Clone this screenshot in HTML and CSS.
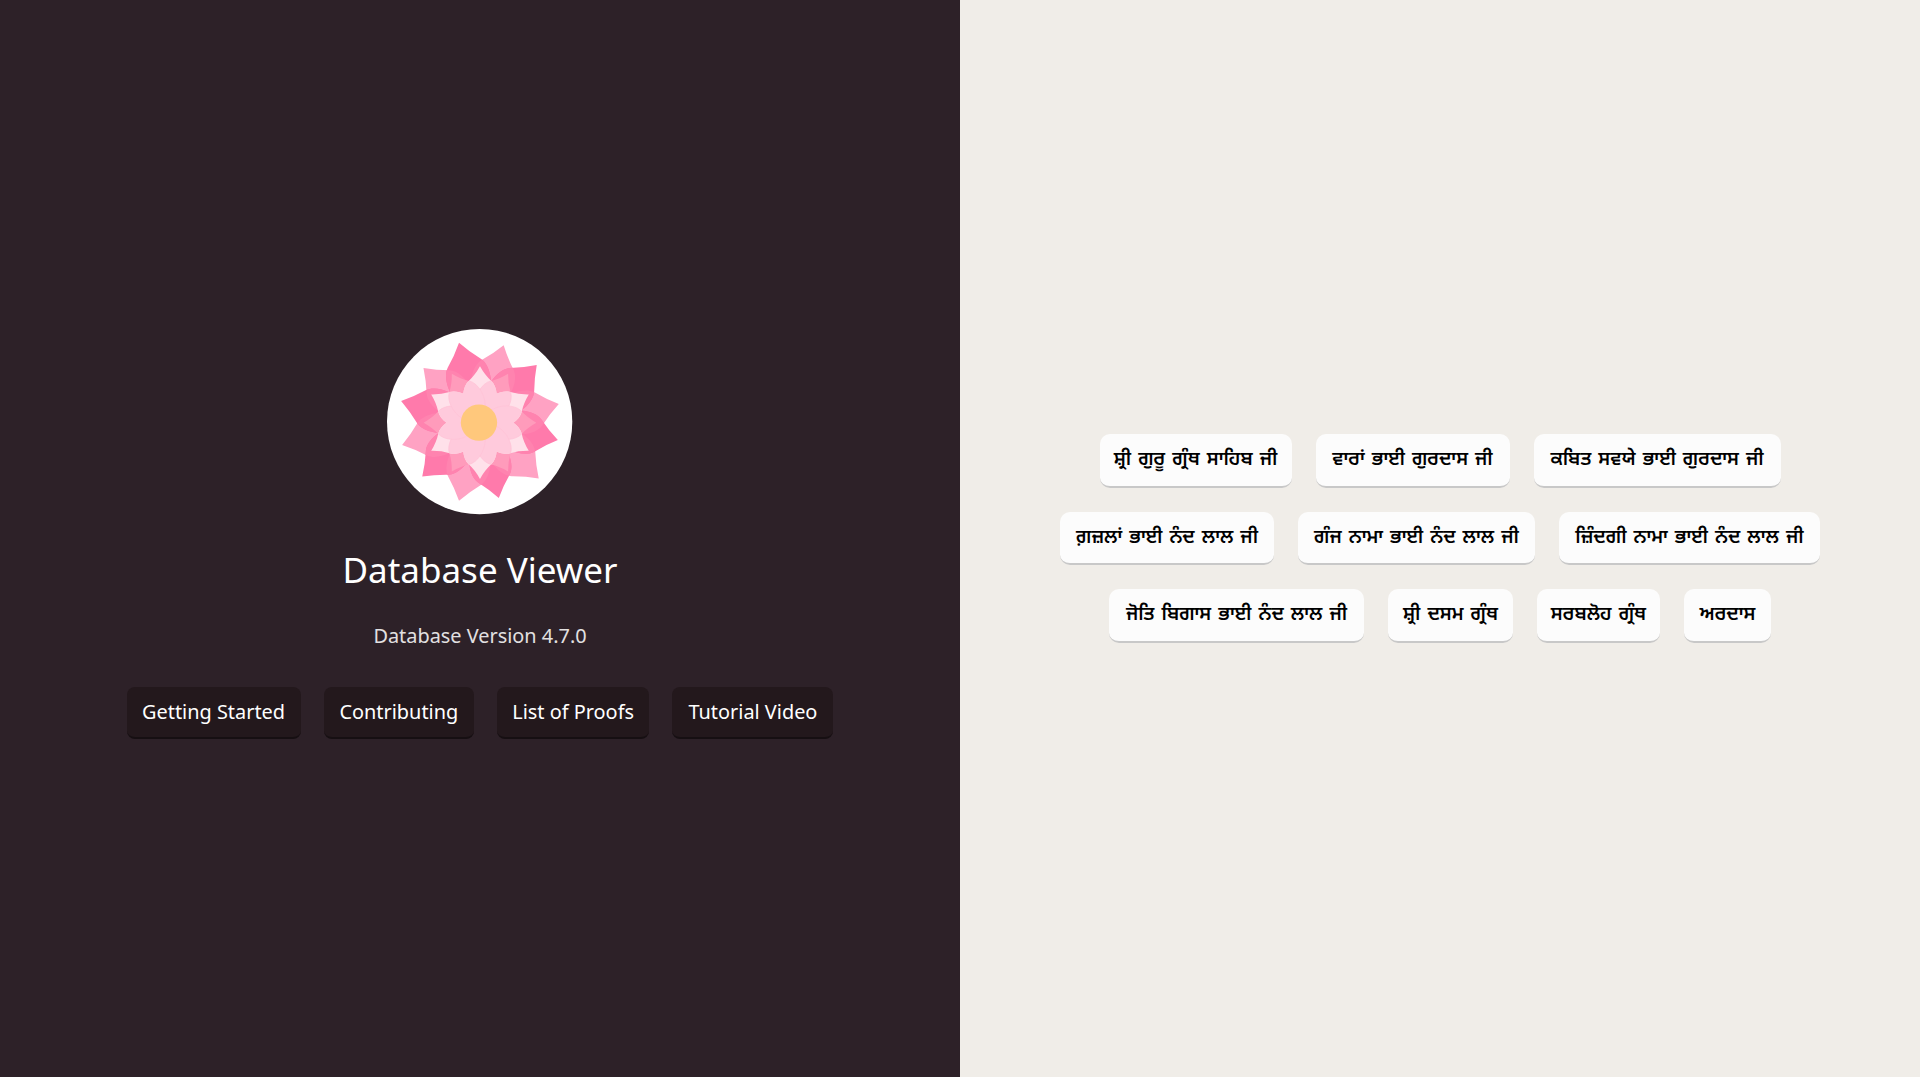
FILE: index.html
```
<!DOCTYPE html>
<html lang="en">
<head>
<meta charset="utf-8">
<title>Database Viewer</title>
<link rel="stylesheet" href="styles.css">
</head>
<body>
<main class="home">
  <section class="intro">
    <svg class="logo" viewBox="22 22 556 556" role="img" aria-label="Lotus">
      <defs>
        <path id="outer" d="M0-243Q-23-209-51-180C-72-155-68-105-45-55L0 0L45-55C68-105 72-155 51-180Q23-209 0-243Z"/>
        <path id="inner" d="M0-169Q-15-142-34-125C-53-107-56-68-40-38Q-25-8 0 0Q25-8 40-38C56-68 53-107 34-125Q15-142 0-169Z"/>
        <clipPath id="deep-clip">
          <use href="#outer" transform="rotate(-14.7) scale(1.02)"/><use href="#outer" transform="rotate(44.5)"/><use href="#outer" transform="rotate(102.6) scale(.985)"/><use href="#outer" transform="rotate(166) scale(.96)"/><use href="#outer" transform="rotate(227) scale(.975)"/><use href="#outer" transform="rotate(285.4) scale(1.01)"/>
        </clipPath>
        <clipPath id="pale-clip">
          <use href="#inner"/><use href="#inner" transform="rotate(60)"/><use href="#inner" transform="rotate(120)"/><use href="#inner" transform="rotate(180)"/><use href="#inner" transform="rotate(240)"/><use href="#inner" transform="rotate(300)"/>
        </clipPath>
        <g id="deep">
          <use href="#outer" transform="rotate(-14.7) scale(1.02)"/><use href="#outer" transform="rotate(44.5)"/><use href="#outer" transform="rotate(102.6) scale(.985)"/><use href="#outer" transform="rotate(166) scale(.96)"/><use href="#outer" transform="rotate(227) scale(.975)"/><use href="#outer" transform="rotate(285.4) scale(1.01)"/>
        </g>
        <g id="soft">
          <use href="#outer" transform="rotate(17)"/><use href="#outer" transform="rotate(76.7)"/><use href="#outer" transform="rotate(133.5)"/><use href="#outer" transform="rotate(195)"/><use href="#outer" transform="rotate(254)"/><use href="#outer" transform="rotate(314) scale(.97)"/>
        </g>
        <g id="pale">
          <use href="#inner"/><use href="#inner" transform="rotate(60)"/><use href="#inner" transform="rotate(120)"/><use href="#inner" transform="rotate(180)"/><use href="#inner" transform="rotate(240)"/><use href="#inner" transform="rotate(300)"/>
        </g>
        <g id="mid">
          <use href="#inner" transform="rotate(30)"/><use href="#inner" transform="rotate(90)"/><use href="#inner" transform="rotate(150)"/><use href="#inner" transform="rotate(210)"/><use href="#inner" transform="rotate(270)"/><use href="#inner" transform="rotate(330)"/>
        </g>
      </defs>
      <circle cx="300" cy="300" r="278" fill="#fff"/>
      <g transform="translate(301 303)">
        <use href="#soft" fill="#ffa2c3"/>
        <use href="#deep" fill="#ff7aab"/>
        <g clip-path="url(#deep-clip)"><use href="#soft" fill="#ff83af"/></g>
        <use href="#mid" fill="#ff9bbb"/>
        <use href="#pale" fill="#ffe1ea"/>
        <g clip-path="url(#pale-clip)"><use href="#mid" fill="#ffcadc" stroke="#ffc2d7" stroke-width="2"/></g>
      </g>
      <circle cx="298" cy="303" r="54.5" fill="#ffc87c"/>
    </svg>
    <h1 class="title">Database Viewer</h1>
    <p class="version">Database Version 4.7.0</p>
    <nav class="links">
      <a class="link w-started">Getting Started</a>
      <a class="link w-contrib">Contributing</a>
      <a class="link w-proofs">List of Proofs</a>
      <a class="link w-video">Tutorial Video</a>
    </nav>
  </section>
  <section class="sources" lang="pa">
    <div class="row">
      <a class="source w192">ਸ਼੍ਰੀ ਗੁਰੂ ਗ੍ਰੰਥ ਸਾਹਿਬ ਜੀ</a>
      <a class="source w194">ਵਾਰਾਂ ਭਾਈ ਗੁਰਦਾਸ ਜੀ</a>
      <a class="source w247">ਕਬਿਤ ਸਵਯੇ ਭਾਈ ਗੁਰਦਾਸ ਜੀ</a>
    </div>
    <div class="row">
      <a class="source w214">ਗ਼ਜ਼ਲਾਂ ਭਾਈ ਨੰਦ ਲਾਲ ਜੀ</a>
      <a class="source w237">ਗੰਜ ਨਾਮਾ ਭਾਈ ਨੰਦ ਲਾਲ ਜੀ</a>
      <a class="source w261">ਜ਼ਿੰਦਗੀ ਨਾਮਾ ਭਾਈ ਨੰਦ ਲਾਲ ਜੀ</a>
    </div>
    <div class="row">
      <a class="source w255">ਜੋਤਿ ਬਿਗਾਸ ਭਾਈ ਨੰਦ ਲਾਲ ਜੀ</a>
      <a class="source w125">ਸ਼੍ਰੀ ਦਸਮ ਗ੍ਰੰਥ</a>
      <a class="source w123">ਸਰਬਲੋਹ ਗ੍ਰੰਥ</a>
      <a class="source w87">ਅਰਦਾਸ</a>
    </div>
  </section>
</main>
</body>
</html>
```
FILE: styles.css
```
* { box-sizing: border-box; }
body { margin: 0; font-family: "Noto Sans", sans-serif; font-size: 20px; }
.home { display: grid; grid-template-columns: 1fr 1fr; height: 1077px; }
.intro {
  display: flex; flex-direction: column; align-items: center;
  padding-top: 329.4px; background: #2d2128; color: #fff;
}
.logo { display: block; width: 185.3px; height: 185.3px; flex: none; }
.title { margin: 30px 0 0; font-size: 35px; font-weight: 400; line-height: 50px; }
.version { margin: 27px 0 0; font-size: 19.9px; line-height: 28px; color: #e2e0e1; }
.links { display: flex; gap: 23.3px; margin-top: 37.3px; }
.link {
  height: 52px; padding-top: 11.5px; border-radius: 8px; border-bottom: 2px solid #160f12;
  background: #23181c; font-size: 19.9px; line-height: 28px; text-align: center; white-space: nowrap;
}
.w-started { width: 174px; }
.w-contrib { width: 150px; }
.w-proofs { width: 152px; }
.w-video { width: 161px; }
.sources {
  display: flex; flex-direction: column; align-items: center; gap: 24px;
  padding-top: 434px; background: #f0ede8; color: #000;
}
.row { display: flex; gap: 24px; }
.source {
  height: 53.5px; padding-top: 12px; border-radius: 10px; border-bottom: 2px solid #c8c8c8;
  background: #fcfcfc; font-family: "Noto Sans Gurmukhi", "Noto Sans", sans-serif;
  font-size: 19.2px; font-weight: 600; word-spacing: 2px; line-height: 30px;
  text-align: center; white-space: nowrap;
}
.w192 { width: 192px; }
.w194 { width: 194px; }
.w247 { width: 247px; }
.w214 { width: 214px; }
.w237 { width: 237px; }
.w261 { width: 261px; }
.w255 { width: 255px; }
.w125 { width: 125px; }
.w123 { width: 123px; }
.w87 { width: 87px; }
```
